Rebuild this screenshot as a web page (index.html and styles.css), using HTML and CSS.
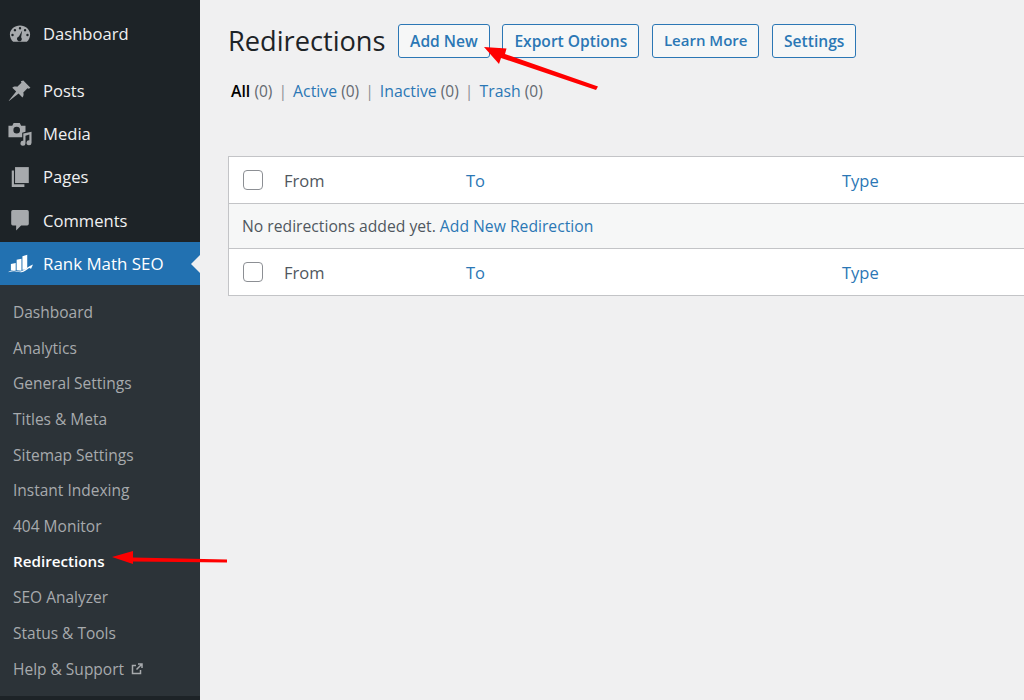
FILE: index.html
```html
<!DOCTYPE html>
<html lang="en">
<head>
<meta charset="utf-8">
<title>Redirections</title>
<link rel="stylesheet" href="styles.css">
</head>
<body>
<div class="app">
  <nav class="side">
    <ul class="menu first">
      <li class="item"><svg class="ic" viewBox="0 0 20 20"><path d="M3.76 17A9 9 0 0 1 .8 10.200C.8 5.800 5 2.200 10 2.200s9.200 3.600 9.200 8a9 9 0 0 1-2.960 6.800H3.760zM10 3.700a1.100 1.100 0 1 0 0 2.200 1.100 1.100 0 0 0 0-2.200zM5.400 5.400a1.100 1.100 0 1 0 0 2.200 1.100 1.100 0 0 0 0-2.200zM14.600 5.400a1.100 1.100 0 1 0 0 2.200 1.100 1.100 0 0 0 0-2.200zM3.200 9.800a1.100 1.100 0 1 0 0 2.200 1.100 1.100 0 0 0 0-2.200zM16.800 9.800a1.100 1.100 0 1 0 0 2.200 1.100 1.100 0 0 0 0-2.200zM12 6.800L9 12.300a2.200 2.200 0 1 0 2 .6z" fill-rule="evenodd"/></svg><span>Dashboard</span></li>
    </ul>
    <ul class="menu second">
      <li class="item"><svg class="ic" viewBox="0 0 20 20"><path d="M13 .5l6.500 6.500-1.500 1-1.200-.5-3.800 3.800c.6 1.800.2 3.500-.8 4.500l-3.500-3.500L0 19l-.2-.2 6.700-8.300-3.500-3.500c1-1 2.700-1.400 4.500-.8l3.800-3.800-.5-1.200z"/></svg><span>Posts</span></li>
      <li class="item"><svg class="ic" viewBox="0 0 20 20"><path fill-rule="evenodd" d="M-.5 2.500h3.500L4.200 0h5.600L11 2.500h4V8l-3 .8v4.200H-.5zM7 3.500a3 3 0 1 0 0 6 3 3 0 0 0 0-6z"/><path d="M20.500 8v10a2.300 2.300 0 1 1-2-2.300V10.500l-3.500 1V18.500a2.300 2.300 0 1 1-2-2.300V9.500z"/></svg><span>Media</span></li>
      <li class="item"><svg class="ic" viewBox="0 0 20 20"><path d="M5.500 1H18v14.500H5.500z"/><path d="M2.500 4h2v12.500H14V19H2.500z"/></svg><span>Pages</span></li>
      <li class="item"><svg class="ic" viewBox="0 0 20 20"><path d="M3.500 1h13a1.500 1.500 0 0 1 1.500 1.500v11a1.500 1.500 0 0 1-1.500 1.500H11l-4.500 4.500V15h-3A1.500 1.500 0 0 1 2 13.500v-11A1.500 1.500 0 0 1 3.500 1z"/></svg><span>Comments</span></li>
      <li class="item current"><svg class="ic" viewBox="0 0 26 18"><path d="M3 9l5-1v7.500H3zM9 4.500l5-1v12.500l-5-.500zM15 1l5-1.500v14l-3 1.500h-2z"/><path d="M0 17.500c3-1.500 5-2.500 8-1.500s5 1.200 8-.5c3-1.700 6-4.500 10-6l-2 4.500-2-.8c-3 2-5 4-8 4.300-3 .3-5-1-7-1-2.500 0-4 .5-7 1z"/></svg><span>Rank Math SEO</span></li>
    </ul>
    <ul class="sub">
      <li>Dashboard</li>
      <li>Analytics</li>
      <li>General Settings</li>
      <li>Titles &amp; Meta</li>
      <li>Sitemap Settings</li>
      <li>Instant Indexing</li>
      <li>404 Monitor</li>
      <li class="on">Redirections</li>
      <li>SEO Analyzer</li>
      <li>Status &amp; Tools</li>
      <li>Help &amp; Support <svg class="ext" viewBox="0 0 12 12"><path d="M5 2.500H1.500v8h8V7M7 1h4v4M11 1L5.500 6.500" fill="none" stroke="currentColor" stroke-width="1.500"/></svg></li>
    </ul>
  </nav>
  <main class="main">
    <header class="head">
      <h1>Redirections</h1>
      <a class="btn">Add New</a>
      <a class="btn">Export Options</a>
      <a class="btn narrow">Learn More</a>
      <a class="btn">Settings</a>
    </header>
    <ul class="filters">
      <li><b>All</b> <i>(0)</i></li>
      <li class="sep">|</li>
      <li><a>Active</a> <i>(0)</i></li>
      <li class="sep">|</li>
      <li><a>Inactive</a> <i>(0)</i></li>
      <li class="sep">|</li>
      <li><a>Trash</a> <i>(0)</i></li>
    </ul>
    <div class="table">
      <div class="row">
        <span class="check"></span><span class="from">From</span><a class="to">To</a><a>Type</a>
      </div>
      <div class="row empty">No redirections added yet.&nbsp;<a>Add New Redirection</a></div>
      <div class="row">
        <span class="check"></span><span class="from">From</span><a class="to">To</a><a>Type</a>
      </div>
    </div>
  </main>
</div>
<svg class="arrows" viewBox="0 0 1024 700"><path d="M598 86.500L505 54l1.500-5.500L484 47l15 17 2-6 95 32z"/><path d="M227 559.500L133 557.500V551L112 557l21 7v-2.500l94 1z"/></svg>
</body>
</html>
```
FILE: styles.css
```css
* { box-sizing: border-box; }
html, body { margin: 0; height: 100%; }
body { background: #f0f0f1; font: 16.600px/1.300 "Open Sans", "Noto Sans", sans-serif; color: #50575e; overflow: hidden; }
ul { list-style: none; margin: 0; padding: 0; }
a { color: #2b77b5; }
i { font-style: normal; color: #646970; font-size: 15.500px; }
.app { display: flex; height: 700px; }
.side { width: 200px; flex: none; background: #1d2327; color: #f0f0f1; }
.menu.first { padding-top: 12.500px; }
.menu.second { padding-top: 13.500px; }
.item { height: 43.200px; display: flex; align-items: center; gap: 12px; padding-left: 9px; position: relative; }
.ic { width: 22px; height: 22px; fill: #a7aaad; flex: none; overflow: visible; }
.current { background: #2271b1; color: #fff; font-size: 16.900px; }
.current .ic { fill: #fff; width: 25px; height: 18px; margin-left: -1px; margin-right: -2px; }
.current::after { content: ""; position: absolute; right: 0; top: 50%; margin-top: -9px; border: 9px solid transparent; border-right-color: #f0f0f1; border-left: 0; }
.sub { background: #2c3338; color: #a7aaad; padding: 9px 0 9px 13px; font-size: 15.500px; }
.sub li { height: 35.700px; display: flex; align-items: center; gap: 7px; }
.sub .on { color: #fff; font-weight: 600; font-size: 15.200px; }
.ext { width: 12px; height: 12px; }
.main { flex: 1; min-width: 0; padding: 23px 0 0 28px; }
.head { display: flex; align-items: center; gap: 12.600px; }
h1 { margin: 0; font-size: 27.200px; font-weight: 400; color: #1d2327; line-height: 36px; }
.btn { height: 34px; padding: 0 11px; border: 1px solid #2b77b5; border-radius: 3px; background: #f6f7f7; font-weight: 600; font-size: 15.600px; display: flex; align-items: center; }
.narrow { font-size: 15px; }
.filters { display: flex; gap: 6px; margin-top: 22px; padding-left: 3px; font-size: 15.800px; }
.filters b { color: #000; font-weight: 600; }
.sep { color: #8c8f94; }
.table { margin-top: 54px; background: #fff; border: 1px solid #c3c4c7; border-right: 0; width: 800px; }
.row { height: 46px; display: flex; align-items: center; padding-left: 14px; font-size: 16.500px; }
.empty { background: #f6f7f7; border-top: 1px solid #c3c4c7; border-bottom: 1px solid #c3c4c7; padding-left: 13px; padding-top: 1px; font-size: 15.700px; }
.check { width: 20px; height: 20px; border: 1px solid #8c8f94; border-radius: 4px; background: #fff; margin-right: 21px; }
.from { width: 182px; padding-top: 2px; }
.to { width: 376px; padding-top: 2px; }
.row > a:last-child { padding-top: 2px; }
.empty > a:last-child { padding-top: 0; }
.arrows { position: absolute; left: 0; top: 0; width: 1024px; height: 700px; fill: #f00; pointer-events: none; }
```
